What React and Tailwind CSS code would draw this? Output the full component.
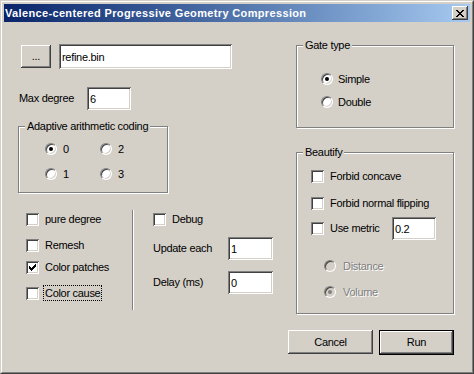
import React from "react";

const raised =
  "bg-[#d4d0c8] shadow-[inset_-1px_-1px_#404040,inset_1px_1px_#ffffff,inset_-2px_-2px_#808080,inset_2px_2px_#d4d0c8]";
const sunken =
  "bg-white shadow-[inset_1px_1px_#808080,inset_-1px_-1px_#ffffff,inset_2px_2px_#404040,inset_-2px_-2px_#d4d0c8]";

function Field({ value, className }) {
  return (
    <div className={`${sunken} flex items-center pl-[3px] pt-[1px] text-black ${className}`}>
      {value}
    </div>
  );
}

function CheckBox({ checked }) {
  return (
    <div className={`${sunken} w-[13px] h-[13px] shrink-0`}>
      {checked && (
        <svg width="13" height="13" viewBox="0 0 13 13" shapeRendering="crispEdges">
          <rect x="3" y="5" width="1" height="3" fill="#000" />
          <rect x="4" y="6" width="1" height="3" fill="#000" />
          <rect x="5" y="7" width="1" height="3" fill="#000" />
          <rect x="6" y="6" width="1" height="3" fill="#000" />
          <rect x="7" y="5" width="1" height="3" fill="#000" />
          <rect x="8" y="4" width="1" height="3" fill="#000" />
          <rect x="9" y="3" width="1" height="3" fill="#000" />
        </svg>
      )}
    </div>
  );
}

function Radio({ checked, disabled }) {
  return (
    <div
      className={`w-[12px] h-[12px] shrink-0 rounded-full flex items-center justify-center border border-t-[#808080] border-l-[#808080] border-r-white border-b-white shadow-[inset_1px_1px_#404040,inset_-1px_-1px_#d4d0c8] ${
        disabled ? "bg-[#d4d0c8]" : "bg-white"
      }`}
    >
      {checked && (
        <div className={`w-[4px] h-[4px] rounded-full ${disabled ? "bg-[#808080]" : "bg-black"}`} />
      )}
    </div>
  );
}

function Group({ title, className, children }) {
  return (
    <div
      className={`relative box-border border border-[#808080] shadow-[inset_1px_1px_#ffffff,1px_1px_#ffffff] ${className}`}
    >
      <div className="absolute left-[6px] -top-[8px] bg-[#d4d0c8] px-[2px] leading-[14px]">{title}</div>
      {children}
    </div>
  );
}

function CloseGlyph() {
  const r = [
    [0, 0, 2], [6, 0, 2], [1, 1, 2], [5, 1, 2], [2, 2, 4], [3, 3, 2], [2, 4, 4], [1, 5, 2], [5, 5, 2], [0, 6, 2], [6, 6, 2],
  ];
  return (
    <svg width="8" height="7" viewBox="0 0 8 7" shapeRendering="crispEdges">
      {r.map(([x, y, w], i) => (
        <rect key={i} x={x} y={y} width={w} height="1" fill="#000" />
      ))}
    </svg>
  );
}

export default function App() {
  return (
    <div
      className="w-[474px] h-[374px] bg-[#d4d0c8] border border-t-[#d4d0c8] border-l-[#d4d0c8] border-r-[#404040] border-b-[#404040] text-[11px] tracking-[-0.3px] text-black overflow-hidden"
      style={{ fontFamily: '"Liberation Sans", Arial, sans-serif' }}
    >
      <div className="h-full border border-t-white border-l-white border-r-[#808080] border-b-[#808080] p-[2px] flex flex-col">
        {/* Title bar */}
        <div className="h-[18px] shrink-0 flex items-center justify-between bg-gradient-to-r from-[#0a246a] to-[#a6caf0]">
          <span className="pl-[1px] text-white font-bold text-[11px] leading-[18px] tracking-[0.35px]">
            Valence-centered Progressive Geometry Compression
          </span>
          <div className={`${raised} mr-[2px] w-[16px] h-[14px] flex items-center justify-center`}>
            <CloseGlyph />
          </div>
        </div>

        {/* Client */}
        <div className="flex flex-col">
          <div className="flex">
            {/* Left column */}
            <div className="w-[292px] flex flex-col">
              <div className="mt-[22px] h-[25px] flex items-center pl-[17px] gap-[8px]">
                <div className={`${raised} w-[30px] h-[23px] flex items-center justify-center pb-[1px]`}>...</div>
                <Field value="refine.bin" className="w-[173px] h-[25px]" />
              </div>
              <div className="mt-[18px] h-[23px] flex items-center pl-[15px]">
                <span className="w-[68px]">Max degree</span>
                <Field value="6" className="w-[44px] h-[23px]" />
              </div>
              <Group title="Adaptive arithmetic coding" className="mt-[16px] ml-[14px] w-[150px] h-[67px]">
                <div className="pt-[14px] pl-[26px] grid grid-cols-[55px_55px] gap-y-[9px]">
                  <div className="h-[16px] flex items-center gap-[6px]"><Radio checked /><span>0</span></div>
                  <div className="h-[16px] flex items-center gap-[6px]"><Radio /><span>2</span></div>
                  <div className="h-[16px] flex items-center gap-[6px]"><Radio /><span>1</span></div>
                  <div className="h-[16px] flex items-center gap-[6px]"><Radio /><span>3</span></div>
                </div>
              </Group>
              <div className="mt-[17px] h-[100px] flex">
                <div className="w-[128px] pl-[22px] flex flex-col">
                  <div className="mt-[1px] h-[16px] flex items-center">
                    <CheckBox />
                    <span className="ml-[4px] px-[1px] border border-transparent">pure degree</span>
                  </div>
                  <div className="mt-[10px] h-[16px] flex items-center">
                    <CheckBox />
                    <span className="ml-[4px] px-[1px] border border-transparent">Remesh</span>
                  </div>
                  <div className="mt-[6px] h-[16px] flex items-center">
                    <CheckBox checked />
                    <span className="ml-[4px] px-[1px] border border-transparent">Color patches</span>
                  </div>
                  <div className="mt-[10px] h-[16px] flex items-center">
                    <CheckBox />
                    <span className="ml-[4px] px-[1px] border border-dotted border-black leading-[14px]">Color cause</span>
                  </div>
                </div>
                <div className="w-[2px] h-[100px] border-l border-l-[#808080] border-r border-r-white" />
                <div className="pl-[19px] flex flex-col">
                  <div className="mt-[1px] h-[16px] flex items-center gap-[6px]">
                    <CheckBox />
                    <span>Debug</span>
                  </div>
                  <div className="mt-[10px] h-[23px] flex items-center">
                    <span className="w-[75px]">Update each</span>
                    <Field value="1" className="w-[45px] h-[23px]" />
                  </div>
                  <div className="mt-[11px] h-[23px] flex items-center">
                    <span className="w-[75px]">Delay (ms)</span>
                    <Field value="0" className="w-[45px] h-[23px]" />
                  </div>
                </div>
              </div>
            </div>

            {/* Right column */}
            <div className="w-[158px] flex flex-col">
              <Group title="Gate type" className="mt-[23px] w-[158px] h-[83px]">
                <div className="pt-[25px] pl-[24px] flex flex-col gap-[7px]">
                  <div className="h-[16px] flex items-center gap-[5px]"><Radio checked /><span>Simple</span></div>
                  <div className="h-[16px] flex items-center gap-[5px]"><Radio /><span>Double</span></div>
                </div>
              </Group>
              <Group title="Beautify" className="mt-[24px] w-[158px] h-[162px]">
                <div className="pt-[15px] pl-[14px] flex flex-col">
                  <div className="h-[16px] flex items-center gap-[6px]"><CheckBox /><span>Forbid concave</span></div>
                  <div className="mt-[11px] h-[16px] flex items-center gap-[6px]"><CheckBox /><span>Forbid normal flipping</span></div>
                  <div className="mt-[6px] h-[23px] flex items-center">
                    <CheckBox />
                    <span className="ml-[6px] w-[62px]">Use metric</span>
                    <Field value="0.2" className="w-[44px] h-[23px]" />
                  </div>
                  <div className="mt-[18px] pl-[13px] h-[16px] flex items-center gap-[7px]">
                    <Radio disabled />
                    <span className="text-[#808080] [text-shadow:1px_1px_0_#ffffff]">Distance</span>
                  </div>
                  <div className="mt-[10px] pl-[13px] h-[16px] flex items-center gap-[7px]">
                    <Radio disabled checked />
                    <span className="text-[#808080] [text-shadow:1px_1px_0_#ffffff]">Volume</span>
                  </div>
                </div>
              </Group>
            </div>
          </div>

          {/* Buttons */}
          <div className="mt-[16px] flex justify-end pr-[16px] gap-[6px]">
            <div className={`${raised} w-[85px] h-[24px] flex items-center justify-center`}>Cancel</div>
            <div className="w-[75px] h-[25px] border border-black">
              <div className={`${raised} w-full h-full flex items-center justify-center`}>Run</div>
            </div>
          </div>
        </div>
      </div>
    </div>
  );
}
